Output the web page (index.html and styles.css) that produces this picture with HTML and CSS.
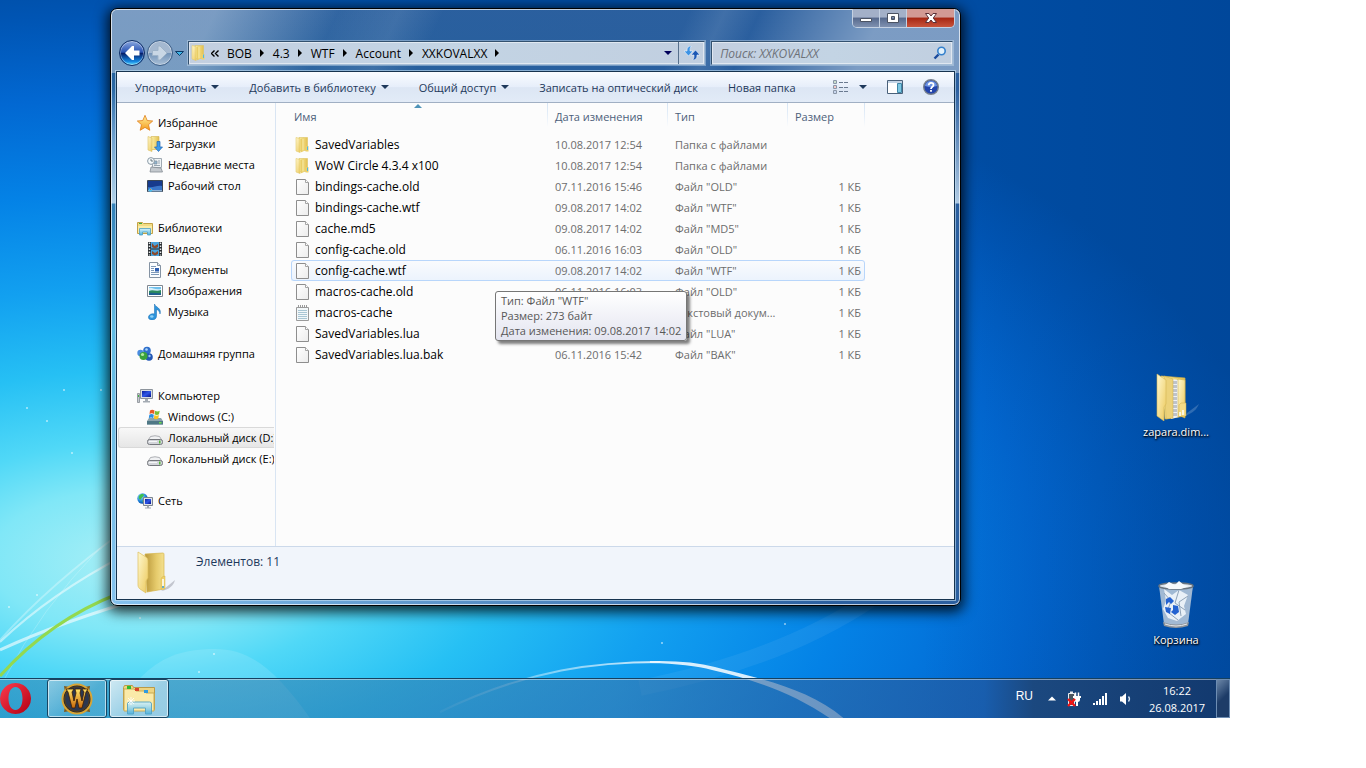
FILE: index.html
```
<!DOCTYPE html>
<html lang="ru">
<head>
    <meta charset="UTF-8">
    <meta name="viewport" content="width=device-width, initial-scale=1.0">
    <title>XXKOVALXX</title>
    <link rel="stylesheet" href="styles.css">
</head>
<body>

<!-- Иконки -->
<svg class="sprite" aria-hidden="true">
    <defs>
        <linearGradient id="g-folder" x1="0" x2="1" y1="0" y2="0">
            <stop offset="0" stop-color="#fdf3ae"/>
            <stop offset="1" stop-color="#e3c04f"/>
        </linearGradient>
        <linearGradient id="g-front" x1="0" x2="1" y1="0" y2="1">
            <stop offset="0" stop-color="#fff8cf"/>
            <stop offset="1" stop-color="#ecc95c"/>
        </linearGradient>
        <linearGradient id="g-inner" x1="0" x2="1" y1="0" y2="0">
            <stop offset="0" stop-color="#b9973a"/>
            <stop offset="0.6" stop-color="#e6cb6c"/>
            <stop offset="1" stop-color="#f4e08e"/>
        </linearGradient>
        <linearGradient id="g-star" x1="0" x2="0" y1="0" y2="1">
            <stop offset="0" stop-color="#fff3a0"/>
            <stop offset="1" stop-color="#f59a1c"/>
        </linearGradient>
        <linearGradient id="g-screen" x1="0" x2="1" y1="0" y2="1">
            <stop offset="0" stop-color="#0a1f9c"/>
            <stop offset="0.5" stop-color="#2f57e8"/>
            <stop offset="1" stop-color="#07128a"/>
        </linearGradient>
        <linearGradient id="g-page" x1="0" x2="1" y1="0" y2="1">
            <stop offset="0" stop-color="#ffffff"/>
            <stop offset="1" stop-color="#ececec"/>
        </linearGradient>
        <linearGradient id="g-glass" x1="0" x2="0" y1="0" y2="1">
            <stop offset="0" stop-color="#d6f3fb"/>
            <stop offset="1" stop-color="#4fb3de"/>
        </linearGradient>
        <linearGradient id="g-red" x1="0" x2="1" y1="0" y2="1">
            <stop offset="0" stop-color="#ff3b4e"/>
            <stop offset="1" stop-color="#b00012"/>
        </linearGradient>
        <radialGradient id="g-globe" cx="0.35" cy="0.3" r="0.8">
            <stop offset="0" stop-color="#9fe4ff"/>
            <stop offset="0.6" stop-color="#1a7fd8"/>
            <stop offset="1" stop-color="#0a3f98"/>
        </radialGradient>
        <linearGradient id="g-gold" x1="0" x2="0" y1="0" y2="1">
            <stop offset="0" stop-color="#ffe66b"/>
            <stop offset="1" stop-color="#c9680a"/>
        </linearGradient>
    </defs>

    <symbol id="i-folder" viewBox="0 0 16 16">
        <path d="M4 .500h8.500v13H4z" fill="url(#g-folder)" stroke="#dcc263" stroke-width="0.6"/>
        <path d="M1 .500l4 1V15.500L1 14z" fill="url(#g-front)" stroke="#e2c968" stroke-width="0.6"/>
        <path d="M5.500 2l3.500-1.500v13.500l-3.500 1.500z" fill="#e9cd66"/>
        <path d="M8 1.500v12" stroke="#fbf0b0" stroke-width="1"/>
        <path d="M10.500 9h3v5.500h-3z" fill="#ecd069"/>
        <path d="M12.500 9.500v3.500" stroke="#4fb6e8" stroke-width="1"/>
    </symbol>
    <symbol id="i-file" viewBox="0 0 16 16">
        <path d="M1.500.500h9l3 3v12h-12z" fill="url(#g-page)" stroke="#8e8e8e"/>
        <path d="M10.500.500v3h3" fill="#fff" stroke="#a5a5a5"/>
    </symbol>
    <symbol id="i-text" viewBox="0 0 16 16">
        <path d="M1.500 2.500h12v13h-12z" fill="#f2f7f9" stroke="#9a9a9a"/>
        <path d="M3 5.500h9M3 7.500h9M3 9.500h9M3 11.500h9M3 13.500h9" stroke="#a9c6d4"/>
        <path d="M3.500 0v3M5.500 0v3M7.500 0v3M9.500 0v3M11.500 0v3" stroke="#9b9b9b" stroke-dasharray="2 1"/>
    </symbol>
    <symbol id="i-star" viewBox="0 0 16 16">
        <path d="M8 .3l2.200 5.200 5.500.5-4.200 3.700 1.300 5.600L8 12.400l-4.800 2.900 1.300-5.600L.3 6l5.500-.5z" fill="url(#g-star)" stroke="#e07d1a" stroke-width="0.8"/>
    </symbol>
    <symbol id="i-down" viewBox="0 0 16 16">
        <path d="M4 .500h8v13H4z" fill="url(#g-folder)" stroke="#d2b450" stroke-width="0.6"/>
        <path d="M1 .500l4 1.500v13.500l-4-1.500z" fill="url(#g-front)" stroke="#dcc05f" stroke-width="0.6"/>
        <path d="M10 5.500h3v5.500h2.500L11.500 15.500 7.500 11H10z" fill="#3d9be8" stroke="#1f66b5" stroke-width="0.7"/>
    </symbol>
    <symbol id="i-recent" viewBox="0 0 16 16">
        <path d="M5.500 1.500h9v9h-9z" fill="#eef2f5" stroke="#9fa9b2"/>
        <path d="M7 4h3v3H7zM11 4h2M11 6h2M7 8.500h6" fill="#8fb4cf" stroke="#8494a2" stroke-width="0.8"/>
        <path d="M4 10l10 1 1.500 4H3z" fill="#c4c9ce" stroke="#868e96" stroke-width="0.8"/>
        <circle cx="4" cy="4" r="3.400" fill="#f5fafc" stroke="#8b9aa6"/>
        <path d="M4 2v2h2" fill="none" stroke="#4a5a66" stroke-width="0.8"/>
    </symbol>
    <symbol id="i-desk" viewBox="0 0 16 16">
        <path d="M.500 2.500h15v11H.500z" fill="#3a75c8" stroke="#3a4654"/>
        <path d="M1 3h14v5C10 7 6 10 1 9z" fill="#173b8d"/>
        <path d="M1 12h14v1.500H1z" fill="#8fb2d6"/>
        <circle cx="3.500" cy="12" r="1.800" fill="#4cc0f0"/>
        <path d="M3 11h1v1H3z" fill="#f26522"/>
    </symbol>
    <symbol id="i-lib" viewBox="0 0 16 16">
        <path d="M.500 2.500h5l1 1h9v10H.500z" fill="#f3dc83" stroke="#c3a247"/>
        <path d="M2 3.500h3" stroke="#3dab3d"/>
        <path d="M1 6h14v7H1z" fill="#f9eba8"/>
        <path d="M2.500 15V8.500h11V15h-3v-3h-5v3z" fill="url(#g-glass)" stroke="#4d9fc4" stroke-width="0.8"/>
    </symbol>
    <symbol id="i-video" viewBox="0 0 16 16">
        <path d="M1 1h14v14H1z" fill="#2b2f33"/>
        <path d="M2.500 1.500v13M13.500 1.500v13" stroke="#e8ecee" stroke-dasharray="1.500 1.500" stroke-width="1.500"/>
        <path d="M4 1h8v6.500H4zM4 8.500h8V15H4z" fill="#4aa3dc"/>
        <path d="M5 2l2.500 3L11 3v3L8 7.500 5 6zM5 10l3 2 3-2v3l-3 1.500L5 13z" fill="#8c4a2c"/>
    </symbol>
    <symbol id="i-docs" viewBox="0 0 16 16">
        <path d="M2.500.500h8l3 3v12h-11z" fill="#fbfdff" stroke="#8593a3"/>
        <path d="M10.500.500v3h3" fill="#dfe7ef" stroke="#8593a3"/>
        <path d="M4 4.500h5M4 6.500h3M4 8.500h3M4 10.500h8M4 12.500h8" stroke="#7f9ab8"/>
        <path d="M8 6h4v3.500H8z" fill="#2c5db0"/>
    </symbol>
    <symbol id="i-pics" viewBox="0 0 16 16">
        <path d="M.500 2.500h15v11H.500z" fill="#fff" stroke="#7f8790"/>
        <path d="M2 4h12v8H2z" fill="#6fc0ec"/>
        <path d="M2 5c3-1 5 2 12 1v2H2z" fill="#d5effb"/>
        <path d="M2 8c4-2 7 1 12-1v5H2z" fill="#2b8a5f"/>
        <path d="M2 10c4-1 8 1 12 0v2H2z" fill="#1f5f8f"/>
    </symbol>
    <symbol id="i-music" viewBox="0 0 16 16">
        <path d="M7.500 0c1 3.500 7.500 4 5.500 10-.3-3-2-4-3.500-4.500v6.500c0 2.500-2 4-4.500 4s-4-1.500-3.500-3.500c.6-2 3.500-3.500 6-2.500z" fill="#2d94dc" stroke="#1568ae" stroke-width="0.5"/>
        <ellipse cx="4.800" cy="12.500" rx="1.700" ry="1.200" fill="#8fd2f7"/>
    </symbol>
    <symbol id="i-group" viewBox="0 0 16 16">
        <circle cx="10" cy="4.500" r="3.800" fill="#2f6fcb"/>
        <circle cx="3.500" cy="7" r="3.200" fill="#4a8be0"/>
        <circle cx="12" cy="11" r="3.800" fill="#2257b5"/>
        <circle cx="6.500" cy="10" r="4" fill="#3aa23a"/>
        <circle cx="5.500" cy="8.500" r="1.600" fill="#b2e8a0"/>
        <circle cx="9.500" cy="3.500" r="1.300" fill="#aed6fa"/>
        <circle cx="12.500" cy="10" r="1.200" fill="#9cc6f5"/>
    </symbol>
    <symbol id="i-pc" viewBox="0 0 16 16">
        <path d="M.500 5.500h2v9h-2z" fill="#c5cacf" stroke="#858b92" stroke-width="0.8"/>
        <path d="M1 7h1v2H1z" fill="#3db23d"/>
        <path d="M3.500 1.500h12v9h-12z" fill="#d8dde3" stroke="#8d949c"/>
        <path d="M5 3h9v6H5z" fill="url(#g-screen)"/>
        <path d="M8 11h3v2h2v1.500H6V13h2z" fill="#a4abb3"/>
    </symbol>
    <symbol id="i-win" viewBox="0 0 16 16">
        <path d="M2 9h12l2 3v3.500H0V12z" fill="#8ba3ad"/>
        <path d="M0 12h16v3.500H0z" fill="#4f7886"/>
        <path d="M12 13h2.500v1.500H12z" fill="#6fe04d"/>
        <path d="M3 1.500c1.500-1 3-1 4.500 0L7 5c-1.500-1-3-1-4.500 0z" fill="#ea5a24"/>
        <path d="M8.200 1.700c1.500 1 3 1 4.500 0L12 5.300c-1.500 1-3 1-4.500 0z" fill="#7cbf33"/>
        <path d="M2.300 5.700c1.500-1 3-1 4.500 0l-.5 3.500c-1.500-1-3-1-4.500 0z" fill="#2e8fe0"/>
        <path d="M7.400 6c1.500 1 3 1 4.500 0l-.6 3.500c-1.500 1-3 1-4.500 0z" fill="#fcc320"/>
    </symbol>
    <symbol id="i-disk" viewBox="0 0 16 16">
        <path d="M3.500 6.500q4.500-1.500 9 0l2.500 4H1z" fill="#f0f1f3" stroke="#9a9da2" stroke-width="0.8"/>
        <rect x="0.500" y="9.500" width="15" height="5" rx="2" fill="#d2d4d9" stroke="#74777c"/>
        <path d="M2 11.500h8" stroke="#f6f7f8"/>
        <path d="M12 10.500h1.500v3H12z" fill="#56b83a"/>
    </symbol>
    <symbol id="i-net" viewBox="0 0 16 16">
        <circle cx="5.500" cy="5.500" r="5.200" fill="url(#g-globe)"/>
        <path d="M2 3c2-3 5-2 5-1S5 4 4 6 1 5 2 3zM5 8c2-1 3 0 2 2z" fill="#3fbf4d"/>
        <path d="M6.500 4.500h9v8h-9z" fill="#dfe4ea" stroke="#7d858f"/>
        <path d="M8 6h6v5H8z" fill="url(#g-screen)"/>
        <path d="M10 12.500h2v2h2v1H8v-1h2z" fill="#a0a7b0"/>
    </symbol>
    <symbol id="i-big-folder" viewBox="0 0 38 44">
        <path d="M27 38l11-9c-1 5-6 10-14 11z" fill="#8b8f98" opacity="0.45"/>
        <path d="M8 3l18-1c1 0 1 1 1 2v34l-17 3z" fill="url(#g-inner)" stroke="#d6b54b" stroke-width="0.7"/>
        <path d="M1 1l8 5c2 1 2 3 2 5v16l-2 3v12L3 38c-1-1-2-2-2-4z" fill="url(#g-front)" stroke="#dcbf5c" stroke-width="0.7"/>
        <path d="M25 26l3-1v13h-4V28z" fill="#efd16b" stroke="#d6b54b" stroke-width="0.5"/>
        <path d="M26 28v7" stroke="#fff" stroke-width="1.500"/>
        <path d="M26 35v2" stroke="#3ca0e0" stroke-width="1.500"/>
    </symbol>
</svg>

<main class="desktop">
    <svg class="wallpaper" viewBox="0 0 1230 718" preserveAspectRatio="none" aria-hidden="true">
        <defs>
            <radialGradient id="w-sky" gradientUnits="userSpaceOnUse" cx="0" cy="0" r="1" gradientTransform="translate(130 560) scale(1160 590)">
                <stop offset="0" stop-color="#a8eff6"/>
                <stop offset="0.12" stop-color="#80e7f7"/>
                <stop offset="0.2" stop-color="#50d8f7"/>
                <stop offset="0.32" stop-color="#26c0f4"/>
                <stop offset="0.46" stop-color="#12a0f0"/>
                <stop offset="0.62" stop-color="#0482e6"/>
                <stop offset="0.78" stop-color="#0268d2"/>
                <stop offset="0.92" stop-color="#0055b4"/>
                <stop offset="1" stop-color="#004da4"/>
            </radialGradient>
            <linearGradient id="w-dark" x1="0" x2="1" y1="0" y2="0">
                <stop offset="0.75" stop-color="#003c88" stop-opacity="0"/>
                <stop offset="1" stop-color="#003c88" stop-opacity="0.35"/>
            </linearGradient>
            <linearGradient id="w-arc" gradientUnits="userSpaceOnUse" x1="440" x2="660" y1="0" y2="0">
                <stop offset="0" stop-color="#fff" stop-opacity="0.1"/>
                <stop offset="1" stop-color="#fff" stop-opacity="0.8"/>
            </linearGradient>
        </defs>
        <path d="M0 0h1230v718H0z" fill="url(#w-sky)"/>
        <path d="M0 0h1230v718H0z" fill="url(#w-dark)"/>
        <path d="M140 678c20-20 40-29 75-29s60 20 95 69H140z" fill="#fff" opacity="0.12"/>
        <g fill="none" stroke="#fff">
            <path d="M0 640Q50 584 125 530" opacity="0.3" stroke-width="2"/>
            <path d="M0 642Q50 594 125 555" opacity="0.5" stroke-width="2"/>
            <path d="M0 650Q60 622 150 596" opacity="0.6" stroke-width="3"/>
            <path d="M5 678Q40 610 100 548" opacity="0.2"/>
            <path d="M640 688Q780 660 870 600" opacity="0.06" stroke-width="16"/>
        </g>
        <path d="M0 676Q50 620 120 593" fill="none" stroke="#93d94f" stroke-width="3"/>
        <path d="M440 712C530 668 600 662 660 662" fill="none" stroke="url(#w-arc)" stroke-width="2"/>
        <path d="M650 661Q690 660 715 667C765 680 815 690 850 724L838 724C800 696 760 681 712 670Q690 664 650 663z" fill="#eef8ff" opacity="0.9"/>
        <g fill="#fff" opacity="0.6">
            <circle cx="101" cy="390" r="1"/><circle cx="64" cy="390" r="1"/><circle cx="27" cy="408" r="1"/>
            <circle cx="47" cy="421" r="1"/><circle cx="72" cy="453" r="1"/><circle cx="9" cy="607" r="1"/>
            <circle cx="140" cy="618" r="1"/><circle cx="199" cy="672" r="1"/><circle cx="662" cy="643" r="1"/>
            <circle cx="785" cy="624" r="1"/><circle cx="37" cy="595" r="1"/><circle cx="214" cy="654" r="1"/>
        </g>
    </svg>

    <a class="shortcut shortcut-folder" href="#">
        <svg width="48" height="48" viewBox="0 0 48 48" aria-hidden="true">
            <path d="M35 40l12-9c-2 5-6 9-14 12z" fill="#9ab8dc" opacity="0.3"/>
            <path d="M9 3l24 2v38l-20 3z" fill="url(#g-folder)" stroke="#cfae48" stroke-width="0.7"/>
            <path d="M19 6l8 1v37l-8 2z" fill="#eef1f5"/>
            <path d="M22 8v36M24 8v36" stroke="#8f959e" stroke-dasharray="3 1"/>
            <path d="M26 6l7 1v38l-5-2-2 1z" fill="url(#g-front)" stroke="#cfae48" stroke-width="0.6"/>
            <path d="M12 3l9 3v39l-7 1z" fill="#ecd27a" stroke="#cfae48" stroke-width="0.5"/>
            <path d="M5 1l9 6v24l-2 3v14l-7-5z" fill="url(#g-front)" stroke="#d5b655" stroke-width="0.6"/>
            <path d="M29 30h5v13h-7V32z" fill="#f4dc86" stroke="#cfae48" stroke-width="0.5"/>
            <path d="M31 37v5M28 39v4" stroke="#fff" stroke-width="1.500"/>
        </svg>
        <span>zapara.dim...</span>
    </a>
    <a class="shortcut shortcut-bin" href="#">
        <svg width="48" height="48" viewBox="0 0 48 48" aria-hidden="true">
            <path d="M7 5h34l-5 38q-12 6-24 0z" fill="#bccbda" opacity="0.85"/>
            <path d="M12 8l8 6 7-5 9 5-4 11 2 8-9 7-9-3-5-9 3-8z" fill="#e9f0f7"/>
            <path d="M12 12l7 8-4 11M27 9l-4 13 10 7M36 15l-9 6 2 14M17 32l9 7" fill="none" stroke="#8fa3b8"/>
            <ellipse cx="24" cy="5" rx="17" ry="3" fill="#dde4eb" stroke="#69747f" stroke-width="1.500"/>
            <path d="M12 5l5-4 6 3 4-4 5 4 5 1-8 3H17z" fill="#f6f9fc"/>
            <path d="M11 41q13 5 26 0l-1 4q-12 4-24 0z" fill="#8d949b"/>
            <path d="M13 43q11 4 22 0" fill="none" stroke="#e6e9ec"/>
            <path d="M14 18l4-2 4 4-3 3-2-2-3 3zM13 26l6 1-1 6-4-2zM21 24l5 1 1 6-4 3-4-3 2-2z" fill="#2462d0"/>
        </svg>
        <span>Корзина</span>
    </a>

    <section class="window">
        <header class="titlebar">
            <div class="controls">
                <button class="ctl" type="button" aria-label="Свернуть">
                    <svg width="14" height="12" viewBox="0 0 14 12"><path d="M1.500 6.500h11v3h-11z" fill="#fff" stroke="#4b5363"/></svg>
                </button>
                <button class="ctl" type="button" aria-label="Развернуть">
                    <svg width="14" height="12" viewBox="0 0 14 12"><path d="M1.500 1.500h11v9h-11zM5.500 4.500v3h3v-3z" fill="#fff" fill-rule="evenodd" stroke="#4b5363"/></svg>
                </button>
                <button class="ctl ctl-close" type="button" aria-label="Закрыть">
                    <svg width="14" height="12" viewBox="0 0 14 12"><path d="M1.500 1.500h3.500l2 2.500 2-2.500h3.500L9.300 6l3.200 4.500H9L7 8l-2 2.500H1.500L4.700 6z" fill="#fff" stroke="#5a3038"/></svg>
                </button>
            </div>
        </header>

        <nav class="navbar">
            <div class="history">
                <button class="round round-back" type="button" aria-label="Назад">
                    <svg width="18" height="16" viewBox="0 0 18 16"><path d="M2 8l7-7h2v4.500h5.500v5H11V15H9z" fill="#fff"/></svg>
                </button>
                <button class="round" type="button" aria-label="Вперёд">
                    <svg width="18" height="16" viewBox="0 0 18 16"><path d="M16 8L9 1H7v4.500H1.500v5H7V15h2z" fill="#c9d7e5" stroke="#9fb4c9"/></svg>
                </button>
                <button class="plain" type="button" aria-label="Последние страницы">
                    <svg width="9" height="5" viewBox="0 0 9 5"><path d="M.500.500h8l-4 4z" fill="#3fb6e8" stroke="#0d3a66"/></svg>
                </button>
            </div>
            <div class="address">
                <svg class="icon"><use href="#i-folder"/></svg>
                <ol class="crumbs">
                    <li class="more"><svg width="8" height="7" viewBox="0 0 8 7"><path d="M3.500.500l-3 3 3 3M7.500.500l-3 3 3 3" fill="none" stroke="#000" stroke-width="1.400"/></svg></li>
                    <li><a href="#">BOB</a></li>
                    <li><a href="#">4.3</a></li>
                    <li><a href="#">WTF</a></li>
                    <li><a href="#">Account</a></li>
                    <li><a href="#">XXKOVALXX</a></li>
                </ol>
                <button class="plain" type="button" aria-label="Предыдущие расположения">
                    <svg width="8" height="4" viewBox="0 0 8 4"><path d="M0 0h8L4 4z" fill="#00005a"/></svg>
                </button>
                <button class="refresh" type="button" aria-label="Обновить">
                    <svg width="16" height="14" viewBox="0 0 16 14">
                        <path d="M7.500 0Q2.500 0 3 5H0l4.500 5L9 5H6Q5.500 2 7.500 0z" fill="#3d93e4" stroke="#eef6ff" stroke-width="0.6"/>
                        <path d="M8.500 14q5 0 4.500-5h3l-4.500-5L7 9h3q.5 3-1.500 5z" fill="#1d58b4" stroke="#eef6ff" stroke-width="0.6"/>
                    </svg>
                </button>
            </div>
            <form class="search">
                <input type="search" aria-label="Поиск" placeholder="Поиск: XXKOVALXX">
                <svg width="14" height="14" viewBox="0 0 14 14" aria-hidden="true">
                    <path d="M1.500 12.500l4-4" stroke="#1a4a9c" stroke-width="2.400"/>
                    <circle cx="8.500" cy="5" r="3.700" fill="#e2f1fb" stroke="#3581cc" stroke-width="1.600"/>
                </svg>
            </form>
        </nav>

        <div class="client">
            <div class="toolbar">
                <button type="button">Упорядочить <i class="caret"></i></button>
                <button type="button">Добавить в библиотеку <i class="caret"></i></button>
                <button type="button">Общий доступ <i class="caret"></i></button>
                <button type="button">Записать на оптический диск</button>
                <button type="button">Новая папка</button>
                <div class="toolbar-right">
                    <button type="button" aria-label="Вид">
                        <svg width="16" height="14" viewBox="0 0 16 14">
                            <path d="M.500.500h3v3h-3zM.500 5.500h3v3h-3zM.500 10.500h3v3h-3z" fill="#fff" stroke="#8a97a8"/>
                            <path d="M1.500 1.500h1v1h-1z" fill="#2f7f3a"/><path d="M1.500 6.500h1v1h-1z" fill="#d02a2a"/><path d="M1.500 11.500h1v1h-1z" fill="#2a5fc0"/>
                            <path d="M6 2.500h4M11 2.500h4M6 7.500h4M11 7.500h4M6 11.500h4M11 11.500h4" stroke="#6a7a90"/>
                        </svg>
                        <i class="caret"></i>
                    </button>
                    <button type="button" aria-label="Область просмотра">
                        <svg width="16" height="14" viewBox="0 0 16 14">
                            <path d="M.500.500h15v13H.500z" fill="#fff" stroke="#4a617a"/>
                            <path d="M1 1h14v2H1z" fill="#c3d4e6"/>
                            <path d="M10.500 3.500h4v9h-4z" fill="#7ec7e2" stroke="#3f86a6"/>
                        </svg>
                    </button>
                    <button type="button" aria-label="Справка">
                        <svg width="16" height="16" viewBox="0 0 16 16">
                            <circle cx="8" cy="8" r="7.300" fill="#2344ab" stroke="#77808d" stroke-width="1.400"/>
                            <path d="M2 7a6 5 0 0 1 12 0q-6 2-12 0z" fill="#6c93e2"/>
                            <path d="M5.700 6.300C5.700 3 10.500 3 10.500 6 10.500 7.800 8 7.800 8 10M8 11v1.700" fill="none" stroke="#fff" stroke-width="1.800"/>
                        </svg>
                    </button>
                </div>
            </div>

            <div class="body">
                <aside class="sidebar">
                    <ul>
                        <li class="group"><a href="#"><svg class="icon"><use href="#i-star"/></svg>Избранное</a></li>
                        <li><a href="#"><svg class="icon"><use href="#i-down"/></svg>Загрузки</a></li>
                        <li><a href="#"><svg class="icon"><use href="#i-recent"/></svg>Недавние места</a></li>
                        <li><a href="#"><svg class="icon"><use href="#i-desk"/></svg>Рабочий стол</a></li>
                    </ul>
                    <ul>
                        <li class="group"><a href="#"><svg class="icon"><use href="#i-lib"/></svg>Библиотеки</a></li>
                        <li><a href="#"><svg class="icon"><use href="#i-video"/></svg>Видео</a></li>
                        <li><a href="#"><svg class="icon"><use href="#i-docs"/></svg>Документы</a></li>
                        <li><a href="#"><svg class="icon"><use href="#i-pics"/></svg>Изображения</a></li>
                        <li><a href="#"><svg class="icon"><use href="#i-music"/></svg>Музыка</a></li>
                    </ul>
                    <ul>
                        <li class="group"><a href="#"><svg class="icon"><use href="#i-group"/></svg>Домашняя группа</a></li>
                    </ul>
                    <ul>
                        <li class="group"><a href="#"><svg class="icon"><use href="#i-pc"/></svg>Компьютер</a></li>
                        <li><a href="#"><svg class="icon"><use href="#i-win"/></svg>Windows (C:)</a></li>
                        <li><a class="current" href="#"><svg class="icon"><use href="#i-disk"/></svg>Локальный диск (D:)</a></li>
                        <li><a href="#"><svg class="icon"><use href="#i-disk"/></svg>Локальный диск (E:)</a></li>
                    </ul>
                    <ul>
                        <li class="group"><a href="#"><svg class="icon"><use href="#i-net"/></svg>Сеть</a></li>
                    </ul>
                </aside>

                <div class="files">
                    <table>
                        <thead>
                            <tr>
                                <th class="col-name sorted">Имя</th>
                                <th class="col-mid">Дата изменения</th>
                                <th class="col-mid">Тип</th>
                                <th class="col-size">Размер</th>
                            </tr>
                        </thead>
                        <tbody>
                            <tr><td><svg class="icon"><use href="#i-folder"/></svg>SavedVariables</td><td>10.08.2017 12:54</td><td>Папка с файлами</td><td></td></tr>
                            <tr><td><svg class="icon"><use href="#i-folder"/></svg>WoW Circle 4.3.4 x100</td><td>10.08.2017 12:54</td><td>Папка с файлами</td><td></td></tr>
                            <tr><td><svg class="icon"><use href="#i-file"/></svg>bindings-cache.old</td><td>07.11.2016 15:46</td><td>Файл "OLD"</td><td>1 КБ</td></tr>
                            <tr><td><svg class="icon"><use href="#i-file"/></svg>bindings-cache.wtf</td><td>09.08.2017 14:02</td><td>Файл "WTF"</td><td>1 КБ</td></tr>
                            <tr><td><svg class="icon"><use href="#i-file"/></svg>cache.md5</td><td>09.08.2017 14:02</td><td>Файл "MD5"</td><td>1 КБ</td></tr>
                            <tr><td><svg class="icon"><use href="#i-file"/></svg>config-cache.old</td><td>06.11.2016 16:03</td><td>Файл "OLD"</td><td>1 КБ</td></tr>
                            <tr class="hovered"><td><svg class="icon"><use href="#i-file"/></svg>config-cache.wtf</td><td>09.08.2017 14:02</td><td>Файл "WTF"</td><td>1 КБ</td></tr>
                            <tr><td><svg class="icon"><use href="#i-file"/></svg>macros-cache.old</td><td>06.11.2016 16:03</td><td>Файл "OLD"</td><td>1 КБ</td></tr>
                            <tr><td><svg class="icon"><use href="#i-text"/></svg>macros-cache</td><td>06.11.2016 16:03</td><td>Текстовый докум...</td><td>1 КБ</td></tr>
                            <tr><td><svg class="icon"><use href="#i-file"/></svg>SavedVariables.lua</td><td>06.11.2016 16:03</td><td>Файл "LUA"</td><td>1 КБ</td></tr>
                            <tr><td><svg class="icon"><use href="#i-file"/></svg>SavedVariables.lua.bak</td><td>06.11.2016 15:42</td><td>Файл "BAK"</td><td>1 КБ</td></tr>
                        </tbody>
                    </table>
                    <div class="tooltip" role="tooltip">
                        Тип: Файл "WTF"<br>
                        Размер: 273 байт<br>
                        Дата изменения: 09.08.2017 14:02
                    </div>
                </div>
            </div>

            <footer class="details">
                <svg width="38" height="44"><use href="#i-big-folder"/></svg>
                <p>Элементов: 11</p>
            </footer>
        </div>
    </section>

    <footer class="taskbar">
        <button class="task task-opera" type="button" aria-label="Opera">
            <svg width="31" height="31" viewBox="0 0 31 31"><path d="M15.500 0a15.500 15.500 0 1 0 .01 0zM15.500 4c4.500 0 7 5 7 11.500s-2.500 11.500-7 11.500-7-5-7-11.500S11 4 15.500 4z" fill="url(#g-red)" fill-rule="evenodd"/></svg>
        </button>
        <button class="task task-open" type="button" aria-label="World of Warcraft">
            <svg width="32" height="32" viewBox="0 0 32 32">
                <path d="M3 3l6 1h14l6-1-1 6v14l1 6-6-1H9l-6 1 1-6V9z" fill="#7d5a1c"/>
                <circle cx="16" cy="16" r="14.500" fill="#1b2233" stroke="#d9a534" stroke-width="2"/>
                <circle cx="16" cy="16" r="12.500" fill="#2b3750" stroke="#5c3f10"/>
                <path d="M5 6h8l-2 3 2 9 2-8-1-4h6l-1 4 2 8 2-9-2-3h6l-2 3-4 16h-3l-2-9-2 9h-3L7 9z" fill="url(#g-gold)" stroke="#3c1d04" stroke-width="0.8"/>
            </svg>
        </button>
        <button class="task task-open task-active" type="button" aria-label="Проводник">
            <svg width="34" height="32" viewBox="0 0 34 32">
                <path d="M1.500 4.500l1-2h8l1 2h21v22h-31z" fill="#eed480" stroke="#b99a48"/>
                <path d="M2 6h10l2 2h8l2 2h8v18H2z" fill="#faeaa9" stroke="#c9ab55"/>
                <path d="M5 3h4v3H5z" fill="#2ebc2e"/><path d="M13 5h4v3h-4z" fill="#d8452a"/><path d="M22 7h4v3h-4z" fill="#2f9be0"/>
                <path d="M5.500 31V21q0-2 2-2h20q2 0 2 2v10h-6v-6h-12v6z" fill="url(#g-glass)" stroke="#4fa2c6" opacity="0.9"/>
                <path d="M9 14v8M5 18h8M6 15l6 6M12 15l-6 6" stroke="#fff" stroke-width="0.8"/>
            </svg>
        </button>
        <div class="tray">
            <span class="lang">RU</span>
            <button class="plain" type="button" aria-label="Показать скрытые значки">
                <svg width="8" height="5" viewBox="0 0 8 5"><path d="M0 4.500L4 .500l4 4z" fill="#fff"/></svg>
            </button>
            <svg width="15" height="16" viewBox="0 0 15 16" aria-hidden="true">
                <path d="M1.500 2.500h6v12h-6z" fill="#4a5560" stroke="#e8edf2"/><path d="M3 .500h3v2H3z" fill="#e8edf2"/>
                <path d="M6 5h8v2h-1v2q0 1.500-2 2v4H9v-4q-2-.5-2-2V7H6z" fill="#fff"/><path d="M8.500 1.500v4M11.500 1.500v4" stroke="#fff" stroke-width="1.500"/>
                <path d="M1 8l7 7M8 8l-7 7" stroke="#f01414" stroke-width="2.400"/>
            </svg>
            <svg width="15" height="12" viewBox="0 0 15 12" aria-hidden="true"><path d="M0 10h2v2H0zM3 8h2v4H3zM6 6h2v6H6zM9 3h2v9H9zM12 0h2v12h-2z" fill="#fff"/></svg>
            <svg width="13" height="14" viewBox="0 0 13 14" aria-hidden="true">
                <path d="M1 4.500h2L7 1v12L3 9.500H1z" fill="#fff"/><path d="M9.500 4.500q2 2.500 0 5" fill="none" stroke="#d8e6f5" stroke-width="1.300"/>
            </svg>
            <time class="clock" datetime="2017-08-26T16:22">16:22<br>26.08.2017</time>
            <button class="peek" type="button" aria-label="Свернуть все окна"></button>
        </div>
    </footer>
</main>

</body>
</html>
```
FILE: styles.css
```
* {
    box-sizing: border-box;
}

body {
    margin: 0;
    background: #fff;
    font-family: "Open Sans", "Noto Sans", sans-serif;
    font-size: 12px;
    color: #000;
}

a {
    color: inherit;
    text-decoration: none;
}

button {
    font: inherit;
    color: inherit;
    padding: 0;
    border: 0;
    background: none;
}

ul, ol {
    list-style: none;
    margin: 0;
    padding: 0;
}

svg {
    flex: none;
    display: block;
}

.sprite {
    position: absolute;
    width: 0;
    height: 0;
}

.icon {
    width: 16px;
    height: 16px;
}

/* Рабочий стол */
.desktop {
    position: relative;
    margin-right: 136px;
    height: calc(100vh - 50px);
    overflow: hidden;
    display: flex;
    flex-direction: column;
    justify-content: flex-end;
}

.wallpaper {
    position: absolute;
    width: 100%;
    height: 100%;
}

.shortcut {
    position: absolute;
    right: 14px;
    width: 80px;
    display: flex;
    flex-direction: column;
    align-items: center;
    gap: 2px;
    color: #fff;
    font-size: 11px;
    line-height: 18px;
    text-shadow: 0 1px 2px #000, 1px 1px 2px #000;
}

.shortcut-folder {
    top: 373px;
}

.shortcut-bin {
    top: 581px;
}

/* Окно проводника */
.window {
    position: absolute;
    left: 110px;
    top: 8px;
    right: 269px;
    bottom: 112px;
    display: flex;
    flex-direction: column;
    padding: 0 5px 5px;
    border: 1px solid #000;
    border-radius: 7px;
    box-shadow: inset 0 0 0 1px rgba(255, 255, 255, 0.7), 0 3px 13px 3px rgba(0, 0, 0, 0.8);
    background:
        linear-gradient(115deg, rgba(255, 255, 255, 0.38) 12%, rgba(255, 255, 255, 0.04) 26%, rgba(255, 255, 255, 0.1) 33%, transparent 38%, transparent 66%, rgba(255, 255, 255, 0.1) 70%, transparent 74%, rgba(255, 255, 255, 0.38) 88%) 0 0 / 100% 64px no-repeat,
        linear-gradient(to bottom, transparent 80px, rgba(210, 230, 245, 0.8) 194px, transparent 195px),
        linear-gradient(to right, transparent, #2b5f9f 85%),
        linear-gradient(to bottom, #2a609e 0, #24609c 60px, #3b7dbb 130px, #3583ba 200px, #62bbe2 320px, #86c2ee 100%);
}

.titlebar {
    display: flex;
    justify-content: flex-end;
    height: 32px;
}

.controls {
    display: flex;
    height: 19px;
    border: 1px solid #c4d1e2;
    border-top: 0;
    border-radius: 0 0 5px 5px;
    overflow: hidden;
}

.ctl {
    display: flex;
    align-items: center;
    justify-content: center;
    width: 27px;
    border-right: 1px solid #c4d1e2;
    background: linear-gradient(#a3b0c8 45%, #56698d 50%, #7f91b0);
}

.ctl-close {
    width: 47px;
    border-right: 0;
    background: linear-gradient(#d29a94 45%, #a62713 50%, #c8543c);
}

.navbar {
    display: flex;
    align-items: center;
    gap: 4px;
    height: 24px;
    margin-bottom: 6px;
    padding: 0 2px 0 3px;
}

.history {
    display: flex;
    align-items: center;
    gap: 2px;
}

.round {
    display: flex;
    align-items: center;
    justify-content: center;
    width: 26px;
    height: 26px;
    border: 1px solid #3d5f88;
    border-radius: 50%;
    box-shadow: inset 0 0 0 1px rgba(255, 255, 255, 0.4);
    background: linear-gradient(#a4b8d0 48%, #7494b8 52%, #a9c0d8);
}

.round-back {
    border-color: #0c2c66;
    background: linear-gradient(#8ca9e0, #2a54b4 46%, #06206c 52%, #1486e0 85%, #5fdcff);
}

.plain {
    display: flex;
    align-items: center;
}

.address,
.search {
    display: flex;
    align-items: center;
    height: 24px;
    border: 1px solid #33516f;
    border-color: #33516f #a5bdd6 #a5bdd6 #33516f;
    outline: 1px solid rgba(190, 212, 232, 0.5);
    box-shadow: inset 0 0 0 1px rgba(255, 255, 255, 0.5);
    background: linear-gradient(to right, #c3cfe0, #c3d4e4 50%, #c1cfe0);
}

.address {
    flex: 1;
    padding-left: 2px;
}

.crumbs {
    flex: 1;
    display: flex;
    align-items: center;
    padding-left: 4px;
}

.crumbs li {
    display: flex;
    align-items: center;
}

.crumbs li:not(.more)::after {
    content: "";
    margin: 0 9px 0 8px;
    border: 4px solid transparent;
    border-left-color: #000;
    border-right: 0;
}

.crumbs .more {
    margin-right: 8px;
}

.refresh {
    display: flex;
    align-items: center;
    justify-content: center;
    align-self: stretch;
    width: 26px;
    margin-left: 6px;
    border-left: 1px solid #56708c;
}

.search {
    width: 29%;
    margin-left: 2px;
    padding: 0 5px 0 8px;
}

.search input {
    flex: 1;
    min-width: 0;
    padding: 0;
    border: 0;
    background: none;
    font: inherit;
}

.search input::placeholder {
    color: #6d7178;
    font-style: italic;
}

.client {
    flex: 1;
    min-height: 0;
    display: flex;
    flex-direction: column;
    border: 1px solid #16334f;
    outline: 1px solid rgba(200, 226, 245, 0.6);
    background: #fcfcfc;
}

.toolbar {
    display: flex;
    align-items: center;
    gap: 30px;
    height: 31px;
    padding: 0 15px 0 18px;
    border-bottom: 1px solid #a0afc3;
    background: linear-gradient(#fafcff, #e6eefa 50%, #dce6f4 52%, #e2ebf7);
    color: #1e395b;
    font-size: 11px;
    white-space: nowrap;
}

.toolbar button {
    display: flex;
    align-items: center;
}

.toolbar-right {
    display: flex;
    align-items: center;
    gap: 20px;
    margin-left: auto;
}

.caret {
    margin-left: 5px;
    border: 4px solid transparent;
    border-top-color: #1e395b;
    border-bottom: 0;
}

.toolbar-right .caret {
    margin-left: 10px;
}

.body {
    flex: 1;
    min-height: 0;
    display: flex;
}

/* Область переходов */
.sidebar {
    width: 159px;
    padding: 9px 1px 0;
    border-right: 1px solid #d9e5f3;
    overflow: hidden;
    font-size: 11px;
    white-space: nowrap;
}

.sidebar ul {
    margin-bottom: 21px;
}

.sidebar a {
    display: flex;
    align-items: center;
    gap: 5px;
    height: 21px;
    padding-left: 28px;
    border: 1px solid transparent;
    border-right: 0;
    overflow: hidden;
}

.sidebar .group a {
    padding-left: 18px;
}

.sidebar .current {
    border-color: #d9d9d9;
    border-radius: 3px 0 0 3px;
    background: linear-gradient(#f8f8f8, #e6e6e6);
}

/* Список файлов */
.files {
    position: relative;
    flex: 1;
    padding-left: 15px;
}

table {
    width: 574px;
    table-layout: fixed;
    border-collapse: separate;
    border-spacing: 0;
}

th {
    height: 31px;
    padding: 0 0 4px 7px;
    background: linear-gradient(#d5e4f4, #e8f0f9 14px, transparent 24px) right / 1px 100% no-repeat;
    color: #4c607a;
    font-size: 11px;
    font-weight: normal;
    text-align: left;
}

.col-name {
    padding-left: 3px;
}

.col-mid {
    width: 120px;
}

.col-size {
    width: 77px;
}

.sorted::before {
    content: "";
    position: absolute;
    left: 138px;
    top: 1px;
    border: 4px solid transparent;
    border-top: 0;
    border-bottom-color: #4f93b8;
}

td {
    height: 21px;
    padding: 0 0 0 7px;
    line-height: 21px;
    color: #6d6d6d;
    font-size: 11px;
    white-space: nowrap;
}

td:first-child {
    display: flex;
    align-items: center;
    gap: 4px;
    padding-left: 4px;
    color: #000;
    font-size: 12px;
}

td:last-child {
    padding-right: 4px;
    text-align: right;
}

.hovered {
    outline: 1px solid #b8d6fb;
    outline-offset: -1px;
    border-radius: 3px;
    background: linear-gradient(#fafbfd, #ebf3fd);
}

.tooltip {
    position: absolute;
    left: 219px;
    top: 188px;
    padding: 1px 5px 2px;
    border: 1px solid #767676;
    border-radius: 3px;
    background: linear-gradient(#fff, #e4e5f0);
    box-shadow: 3px 3px 3px rgba(0, 0, 0, 0.5);
    color: #575757;
    font-size: 11px;
    line-height: 15px;
    white-space: nowrap;
}

.details {
    display: flex;
    gap: 21px;
    height: 53px;
    padding: 4px 20px;
    border-top: 1px solid #ccd9ea;
    background: #f1f5fb;
    color: #1e395b;
}

.details p {
    margin: 2px 0 0;
}

/* Панель задач */
.taskbar {
    position: relative;
    display: flex;
    height: 40px;
    border-top: 1px solid #16405f;
    box-shadow: inset 0 1px rgba(255, 255, 255, 0.45);
    background: linear-gradient(to right, rgba(40, 110, 160, 0.45), rgba(60, 115, 165, 0.55) 50%, rgba(34, 90, 160, 0.7) 80%, rgba(30, 70, 120, 0.9) 84%, rgba(20, 55, 105, 0.9));
}

.task {
    display: flex;
    align-items: center;
    justify-content: center;
}

.task-opera {
    width: 47px;
    justify-content: flex-start;
}

.task-open {
    width: 60px;
    margin-right: 2px;
    border: 1px solid #174563;
    border-radius: 3px;
    box-shadow: inset 0 0 0 1px rgba(255, 255, 255, 0.6);
    background: linear-gradient(135deg, rgba(255, 255, 255, 0.4), rgba(255, 255, 255, 0.1) 60%);
}

.task-active {
    background: linear-gradient(135deg, rgba(255, 255, 255, 0.75), rgba(255, 255, 255, 0.45) 60%);
}

.tray {
    display: flex;
    align-items: center;
    gap: 11px;
    margin-left: auto;
    color: #fff;
}

.lang {
    margin-right: 4px;
    padding-bottom: 6px;
    font-family: "Liberation Sans", sans-serif;
}

.clock {
    width: 68px;
    font-size: 11px;
    line-height: 17px;
    text-align: center;
}

.peek {
    align-self: stretch;
    width: 14px;
    margin-left: -6px;
    border: 1px solid #6d8db3;
    background: linear-gradient(135deg, #6c87a8, #1d3c68 50%);
}
```
